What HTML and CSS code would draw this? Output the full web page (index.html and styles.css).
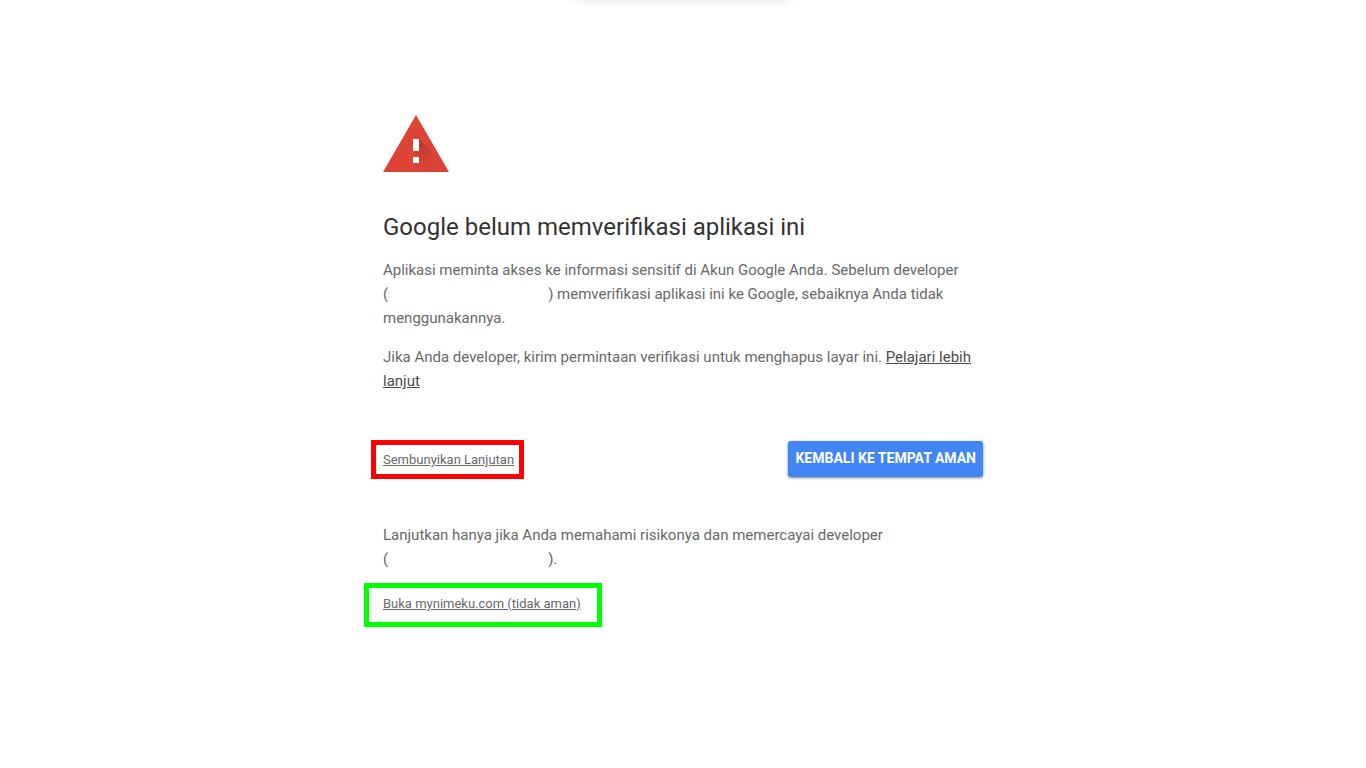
FILE: index.html
```html
<!DOCTYPE html>
<html lang="id">
<head>
<meta charset="utf-8">
<meta name="viewport" content="width=device-width, initial-scale=1">
<title>Google belum memverifikasi aplikasi ini</title>
<link rel="stylesheet" href="styles.css">
</head>
<body>
<div class="top-shadow"></div>
<main class="warning">
  <svg class="warning-icon" viewBox="0 0 66 57" aria-hidden="true">
    <defs>
      <linearGradient id="shade" gradientUnits="userSpaceOnUse" x1="33" y1="27" x2="48" y2="46">
        <stop offset="0" stop-color="#000" stop-opacity=".16"/>
        <stop offset="1" stop-color="#000" stop-opacity=".01"/>
      </linearGradient>
    </defs>
    <path fill="#db4437" d="M33 0L66 57H0Z"/>
    <path fill="url(#shade)" d="M36 24L54 42L63 57H39L30 48H36V42L30 36H36Z"/>
    <path fill="#fff" d="M30 24h6v12h-6zM30 42h6v6h-6z"/>
  </svg>
  <h1 class="title">Google belum memverifikasi aplikasi ini</h1>
  <p class="text">Aplikasi meminta akses ke informasi sensitif di Akun Google Anda. Sebelum developer <span class="developer">(<span class="blank"></span>)</span> memverifikasi aplikasi ini ke Google, sebaiknya Anda tidak menggunakannya.</p>
  <p class="text">Jika Anda developer, kirim permintaan verifikasi untuk menghapus layar ini. <a class="learn" href="#">Pelajari lebih lanjut</a></p>
  <div class="actions">
    <a class="marked marked-red" href="#">Sembunyikan Lanjutan</a>
    <button class="safe" type="button">KEMBALI KE TEMPAT AMAN</button>
  </div>
  <p class="text">Lanjutkan hanya jika Anda memahami risikonya dan memercayai developer <span class="developer">(<span class="blank"></span>).</span></p>
  <a class="marked marked-green" href="#">Buka mynimeku.com (tidak aman)</a>
</main>
</body>
</html>
```
FILE: styles.css
```css
* {
  box-sizing: border-box;
}

body {
  margin: 0;
  background: #fff;
  color: #696969;
  font-family: Roboto, "Liberation Sans", sans-serif;
  font-size: 15px;
  line-height: 24px;
  overflow-x: hidden;
}

.top-shadow {
  position: absolute;
  top: -20px;
  left: 50%;
  width: 216px;
  height: 20px;
  transform: translateX(-50%);
  box-shadow: 0 0 10px rgba(0, 0, 0, .11);
}

.warning {
  max-width: 600px;
  margin: 0 auto;
  padding: 115px 0 40px;
}

.warning-icon {
  display: block;
  width: 66px;
  height: 57px;
}

.title {
  margin: 39px 0 15px;
  color: #333;
  font-size: 24px;
  font-weight: 400;
  line-height: 32px;
}

.text {
  margin: 0 0 15px;
}

.developer {
  white-space: nowrap;
}

.blank {
  display: inline-block;
  width: 160px;
}

.learn {
  color: #4c4c4c;
}

.actions {
  display: flex;
  justify-content: space-between;
  align-items: flex-start;
  margin: 48px 0 46px;
}

.marked {
  display: inline-block;
  border: 5px solid;
  color: #696969;
  font-size: 13px;
}

.marked-red {
  margin: -1px 0 -2px -12px;
  padding: 3px 5px 2px 7px;
  border-color: #f00;
}

.marked-green {
  margin: -3px 0 0 -19px;
  padding: 4px 16px 6px 14px;
  border-color: #0f0;
}

.safe {
  height: 36px;
  padding: 0 7px 2px;
  border: 0;
  border-radius: 3px;
  background: #4285f4;
  color: #fff;
  font: 700 14px/34px Roboto, "Liberation Sans", sans-serif;
  box-shadow: 0 1px 3px rgba(0, 0, 0, .5);
  white-space: nowrap;
}
```
